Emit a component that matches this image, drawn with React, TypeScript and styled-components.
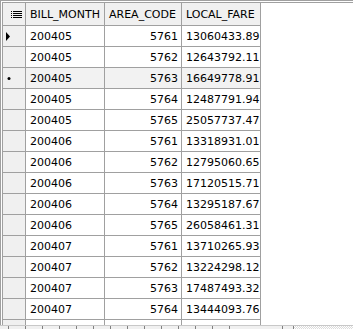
import * as React from "react";
import styled, { createGlobalStyle } from "styled-components";

const GlobalStyle = createGlobalStyle`
  html, body {
    margin: 0;
    padding: 0;
    background: #ffffff;
  }
`;

const Screen = styled.div`
  width: 353px;
  height: 329px;
  overflow: hidden;
  display: flex;
  flex-direction: column;
  font-family: "DejaVu Sans", "Liberation Sans", sans-serif;
  font-size: 11px;
  color: #000000;
  background: #ffffff;
`;

const GridFrame = styled.div`
  flex: 0 0 325px;
  overflow: hidden;
  box-sizing: border-box;
  border-top: 3px double #a0a0a0;
  border-left: 3px double #a0a0a0;
`;

const Table = styled.div`
  display: grid;
  grid-template-columns: 23px 79px 77px 79px;
  grid-auto-rows: 21px;
  grid-template-rows: 23px;
`;

const Cell = styled.div<{ $head?: boolean; $right?: boolean; $shade?: boolean }>`
  box-sizing: border-box;
  border-right: 1px solid #a0a0a0;
  border-bottom: 1px solid #a0a0a0;
  background: ${(p) => (p.$head ? "#f0f0f0" : p.$shade ? "#f2f2f2" : "#ffffff")};
  display: flex;
  align-items: center;
  justify-content: ${(p) => (p.$right ? "flex-end" : "flex-start")};
  padding: ${(p) => (p.$right ? "0 3px 0 0" : "0 0 0 4px")};
  padding-top: 1px;
  white-space: nowrap;
  overflow: hidden;
`;

const Indicator = styled.div`
  box-sizing: border-box;
  border-right: 1px solid #a0a0a0;
  border-bottom: 1px solid #a0a0a0;
  background: #f0f0f0;
  display: flex;
  align-items: center;
  padding-left: 2px;
`;

const HeadIndicator = styled(Indicator)`
  padding-left: 8px;
`;

const Strip = styled.div`
  flex: 0 0 17px;
  display: flex;
  box-sizing: border-box;
  border-top: 1px solid #c8c8c8;
  background: #f0f0f0;
`;

const StripLead = styled.div`
  flex: 0 0 8px;
`;

const StripButton = styled.div<{ $w: number }>`
  flex: 0 0 ${(p) => p.$w}px;
  box-sizing: border-box;
  border-left: 1px solid #808080;
  background: #f0f0f0;
`;

const StripTrack = styled.div`
  flex: 1;
  border-left: 1px solid #808080;
  background: repeating-conic-gradient(#dcdcdc 0 25%, #ffffff 0 50%) 0 0 / 2px 2px;
`;

const ListIcon = () => (
  <svg width="11" height="7" viewBox="0 0 11 7">
    {[0, 2, 4, 6].map((y) => (
      <g key={y} fill="#000">
        <rect x="0" y={y} width="1" height="1" />
        <rect x="2" y={y} width="9" height="1" />
      </g>
    ))}
  </svg>
);

const Arrow = () => (
  <svg width="6" height="9" viewBox="0 0 6 9">
    <polygon points="1,0 5,4.5 1,9" fill="#000" />
  </svg>
);

const Dot = () => (
  <svg width="6" height="3" viewBox="0 0 6 3">
    <circle cx="4" cy="1.5" r="1.5" fill="#000" />
  </svg>
);

type Row = [string, string, string];

const rows: Row[] = [
  ["200405", "5761", "13060433.89"],
  ["200405", "5762", "12643792.11"],
  ["200405", "5763", "16649778.91"],
  ["200405", "5764", "12487791.94"],
  ["200405", "5765", "25057737.47"],
  ["200406", "5761", "13318931.01"],
  ["200406", "5762", "12795060.65"],
  ["200406", "5763", "17120515.71"],
  ["200406", "5764", "13295187.67"],
  ["200406", "5765", "26058461.31"],
  ["200407", "5761", "13710265.93"],
  ["200407", "5762", "13224298.12"],
  ["200407", "5763", "17487493.32"],
  ["200407", "5764", "13444093.76"],
  // next record, only its top edge shows above the bar
  ["", "", ""],
];

const buttonWidths = [17, 17, 17, 17, 17, 17, 17, 17, 17, 17, 17, 17, 17, 53, 11];

export default function App() {
  return (
    <Screen>
      <GlobalStyle />
      <GridFrame>
        <Table>
          <HeadIndicator>
            <ListIcon />
          </HeadIndicator>
          <Cell $head>BILL_MONTH</Cell>
          <Cell $head>AREA_CODE</Cell>
          <Cell $head>LOCAL_FARE</Cell>
          {rows.map((r, i) => (
            <React.Fragment key={i}>
              <Indicator>
                {i === 0 && <Arrow />}
                {i === 2 && <Dot />}
              </Indicator>
              <Cell $shade={i === 2}>{r[0]}</Cell>
              <Cell $right $shade={i === 2}>
                {r[1]}
              </Cell>
              <Cell $shade={i === 2}>{r[2]}</Cell>
            </React.Fragment>
          ))}
        </Table>
      </GridFrame>
      <Strip>
        <StripLead />
        {buttonWidths.map((w, i) => (
          <StripButton key={i} $w={w} />
        ))}
        <StripTrack />
      </Strip>
    </Screen>
  );
}
